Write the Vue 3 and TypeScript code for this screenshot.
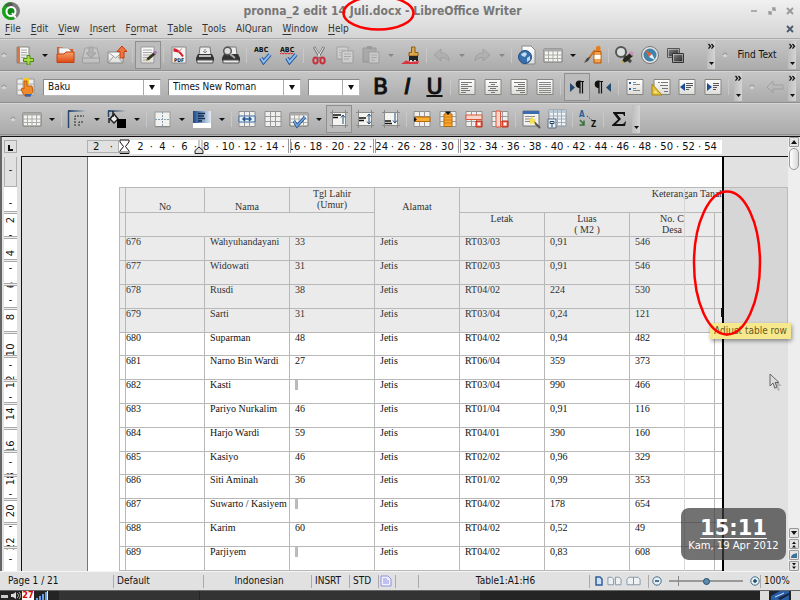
<script setup lang="ts">
import { ref } from 'vue'

interface Tag {
  t: string
  x: number
  y: number
  s: number
  fill: string
}

interface Tool {
  kind: 'icon' | 'arrow' | 'sep'
  id?: string
  label?: string
  on?: boolean
  off?: boolean
  tags?: Tag[]
}

const tool = (id: string, label: string, extra: Partial<Tool> = {}): Tool => ({ kind: 'icon', id, label, ...extra })
const arrow: Tool = { kind: 'arrow' }
const sep: Tool = { kind: 'sep' }
const faded: Tool = { kind: 'arrow', off: true }
const abc: Tag[] = [{ t: 'ABC', x: 2, y: 7, s: 7, fill: '#111' }]

const standard: Tool[] = [
  tool('new', 'New'), arrow, tool('open', 'Open'), tool('save', 'Save', { off: true }), tool('mail', 'E-mail'), sep,
  tool('edit', 'Edit file', { on: true }), sep,
  tool('pdf', 'Export as PDF', { tags: [{ t: 'PDF', x: 5, y: 17, s: 5, fill: '#222' }] }), tool('print', 'Print'), tool('preview', 'Page preview'), sep,
  tool('spell', 'Spelling', { tags: abc }), tool('autospell', 'Auto spellcheck', { tags: abc }), sep,
  tool('cut', 'Cut'), tool('copy', 'Copy', { off: true }), tool('paste', 'Paste', { off: true }), faded, tool('brush', 'Clone formatting'), sep,
  tool('undo', 'Undo', { off: true }), faded, tool('redo', 'Redo', { off: true }), faded, sep,
  tool('globe', 'Hyperlink'), tool('table', 'Table'), arrow, tool('draw', 'Drawing'), sep,
  tool('find', 'Find and replace'), tool('compass', 'Navigator'), tool('gallery', 'Gallery'),
]

const paragraph: Tool[] = [
  sep, tool('left', 'Align left'), tool('center', 'Align center'), tool('right', 'Align right'), tool('justify', 'Justify'), sep,
  tool('ltr', 'Left to right', { on: true }), tool('rtl', 'Right to left'), sep,
  tool('bullets', 'Bullets'), tool('styles', 'Numbering'), tool('outdent', 'Decrease indent'), tool('indent', 'Increase indent'), sep,
]

const tableTools: Tool[] = [
  tool('table', 'Insert table'), arrow, sep, tool('line', 'Line style'), arrow, tool('fill', 'Line color'), arrow, sep,
  tool('borders', 'Borders'), arrow, tool('shade', 'Background color'), arrow, sep,
  tool('merge', 'Merge cells'), tool('split', 'Split cells'), tool('optimize', 'Optimize'), arrow,
  tool('top', 'Top', { on: true }), tool('middle', 'Center vertical'), tool('bottom', 'Bottom'), sep,
  tool('addrow', 'Insert row'), tool('addcol', 'Insert column'), tool('delrow', 'Delete row'), tool('delcol', 'Delete column'), sep,
  tool('autoformat', 'AutoFormat'), tool('props', 'Table properties'), sep,
  tool('sort', 'Sort', { tags: [{ t: 'A', x: 1, y: 8, s: 8, fill: '#28649b' }, { t: 'Z', x: 13, y: 18, s: 8, fill: '#111' }] }), sep, tool('sum', 'Sum'),
]

const menus: [string, string][] = [
  ['F', 'ile'], ['E', 'dit'], ['V', 'iew'], ['I', 'nsert'], ['F|o', 'rmat'], ['T', 'able'], ['T', 'ools'], ['', 'AlQuran'], ['W', 'indow'], ['H', 'elp'],
]
const lead = (m: string) => (m.includes('|') ? m.split('|')[0] : '')
const key = (m: string) => (m.includes('|') ? m.split('|')[1] : m)

const hRuler = Array.from({ length: 53 }, (_, i) => (i % 2 ? '·' : String(i + 2)))
const vRuler = Array.from({ length: 23 }, (_, i) => (i % 2 ? String(i + 1) : '-'))
const colMarks = [289, 374, 459]
const rowMarks = [54, 79, 102, 126, 150, 174, 198, 222, 245, 270, 293, 317, 341, 365, 389]

const rows: string[][] = [
  ['676', 'Wahyuhandayani', '33', 'Jetis', 'RT03/03', '0,91', '546'],
  ['677', 'Widowati', '31', 'Jetis', 'RT02/03', '0,91', '546'],
  ['678', 'Rusdi', '38', 'Jetis', 'RT04/02', '224', '530'],
  ['679', 'Sarti', '31', 'Jetis', 'RT03/04', '0,24', '121'],
  ['680', 'Suparman', '48', 'Jetis', 'RT04/02', '0,94', '482'],
  ['681', 'Narno Bin Wardi', '27', 'Jetis', 'RT06/04', '359', '373'],
  ['682', 'Kasti', '', 'Jetis', 'RT03/04', '990', '466'],
  ['683', 'Pariyo Nurkalim', '46', 'Jetis', 'RT01/04', '0,91', '116'],
  ['684', 'Harjo Wardi', '59', 'Jetis', 'RT04/01', '390', '160'],
  ['685', 'Kasiyo', '46', 'Jetis', 'RT02/02', '0,96', '329'],
  ['686', 'Siti Aminah', '36', 'Jetis', 'RT01/02', '0,99', '353'],
  ['687', 'Suwarto / Kasiyem', '', 'Jetis', 'RT04/02', '178', '654'],
  ['688', 'Karim', '60', 'Jetis', 'RT04/02', '0,52', '49'],
  ['689', 'Parjiyem', '', 'Jetis', 'RT04/02', '0,83', '608'],
]

const style = ref('Baku')
const font = ref('Times New Roman')
const size = ref('')
const zoom = ref(50)
</script>

<template>
  <div class="window">
    <svg class="sprite" aria-hidden="true">
      <defs>
        <linearGradient id="orange" x1="0" y1="0" x2="0" y2="1"><stop offset="0" stop-color="#f9a468" /><stop offset="1" stop-color="#dd4814" /></linearGradient>
        <linearGradient id="paper" x1="0" y1="0" x2="0" y2="1"><stop offset="0" stop-color="#fff" /><stop offset="1" stop-color="#dcdcd8" /></linearGradient>
        <linearGradient id="blue" x1="0" y1="0" x2="1" y2="0"><stop offset="0" stop-color="#174a8c" /><stop offset="1" stop-color="#e4ecf5" /></linearGradient>
        <linearGradient id="fade" x1="0" y1="0" x2="1" y2="0"><stop offset="0" stop-color="#24476b" /><stop offset="1" stop-color="#24476b" stop-opacity="0" /></linearGradient>
        <linearGradient id="dark" x1="0" y1="0" x2="1" y2="1"><stop offset="0" stop-color="#888" /><stop offset="1" stop-color="#222" /></linearGradient>
      </defs>
      <symbol id="new" viewBox="0 0 20 20">
        <path d="M2 2h12v16H2z" fill="url(#paper)" stroke="#85857f" /><path d="M2 2h3v16H2z" fill="#d9744a" />
        <path d="M6 5h6M6 7.500h6M6 10h6M6 12.500h4" stroke="#aaa" />
        <path d="M12 10.500h3v3h3.500v3H15V20h-3v-3.500H8.500v-3H12z" fill="#a5dc47" stroke="#4c8b12" />
      </symbol>
      <symbol id="open" viewBox="0 0 20 20">
        <path d="M2 2h5l2 2h9v13H2z" fill="#d85a22" /><path d="M4 3h9l3 3v6H4z" fill="url(#paper)" stroke="#aaa" />
        <path d="M2 9h7l2-2h8v10.500H2z" fill="url(#orange)" stroke="#c43f10" />
      </symbol>
      <symbol id="save" viewBox="0 0 20 20">
        <path d="M4 3h12l2.500 10v5h-17v-5z" fill="#d0d0d0" stroke="#888" /><path d="M2 13h16" stroke="#888" />
        <path d="M8 2h4v6h3l-5 5-5-5h3z" fill="#aaa" stroke="#888" />
      </symbol>
      <symbol id="mail" viewBox="0 0 20 20">
        <path d="M1 7h15v11H1z" fill="url(#paper)" stroke="#888" /><path d="m1 7 7.500 6L16 7M1 18l5-6m10 6-5-6" fill="none" stroke="#999" />
        <path d="M15 1l5 5.500h-3V13h-4V6.500h-3z" fill="#ee7440" stroke="#c43f10" />
      </symbol>
      <symbol id="edit" viewBox="0 0 20 20">
        <path d="M3 2h13v16H3z" fill="url(#paper)" stroke="#999" /><path d="M5 5h9M5 7.500h9M5 10h8M5 12.500h5M5 15h4" stroke="#aaa" />
        <path d="m8 16 1-3 7-6 2 2-7 6z" fill="#35351f" /><path d="m15 7.500 2-2 2.500 2-2.500 2z" fill="#a679b9" /><path d="m8 16 .700-2 1.500 1.300z" fill="#e0d35f" />
      </symbol>
      <symbol id="pdf" viewBox="0 0 20 20">
        <path d="M3 2h14v16H3z" fill="#f4f4f4" stroke="#888" /><path d="M4.500 4c4 1 8 5 9.500 7.500M4.500 5.500l5 1" fill="none" stroke="#d8202a" stroke-width="2" /><path d="M12.500 3.500c-1 2-2 3-3.500 4" fill="none" stroke="#e0707a" />
      </symbol>
      <symbol id="print" viewBox="0 0 20 20">
        <path d="M5 2h10l1 8H4z" fill="#eee" stroke="#777" /><path d="M10 4v4m-2-2 2 2 2-2" fill="none" stroke="#888" />
        <path d="M3 9h14l2 4v3H1v-3z" fill="#333" /><path d="M4 11h12" stroke="#eee" stroke-width="1.500" /><path d="M2 15h16v3H2z" fill="#e8e8e8" stroke="#555" />
      </symbol>
      <symbol id="preview" viewBox="0 0 20 20">
        <path d="M5 2h10l1 8H4z" fill="#eee" stroke="#777" /><path d="M3 9h14l2 4v3H1v-3z" fill="#333" /><path d="M2 15h16v3H2z" fill="#e8e8e8" stroke="#555" />
        <circle cx="6.500" cy="6" r="3.800" fill="#ddd" stroke="#555" stroke-width="1.500" /><path d="m9 9 5 4" stroke="#aaa" stroke-width="2" />
      </symbol>
      <symbol id="spell" viewBox="0 0 20 20">
        <path d="m9 13 2.500 4L18 9.500" fill="none" stroke="#1f5599" stroke-width="4" /><path d="m9 13 2.500 4L18 9.500" fill="none" stroke="#8dbbed" stroke-width="2" />
      </symbol>
      <symbol id="autospell" viewBox="0 0 20 20"><use href="#spell" /><path d="m2 9 1.500-1L5 9l1.500-1L8 9l1.500-1L11 9l1.500-1L14 9l1.500-1" fill="none" stroke="#d22" /></symbol>
      <symbol id="cut" viewBox="0 0 20 20">
        <path d="m5 2 6.500 11M15 2 8.500 13" stroke="#777" stroke-width="2.500" /><path d="m5.500 2.500 6 10M14.500 2.500l-6 10" stroke="#eee" />
        <ellipse cx="6.500" cy="15.500" rx="2.200" ry="3" fill="none" stroke="#c8323c" stroke-width="2" /><ellipse cx="13.500" cy="15.500" rx="2.200" ry="3" fill="none" stroke="#c8323c" stroke-width="2" />
      </symbol>
      <symbol id="copy" viewBox="0 0 20 20">
        <path d="M2 2h11v12H2z" fill="#e2e2e2" stroke="#888" /><path d="M4 5h7M4 7.500h7M4 10h4" stroke="#aaa" />
        <path d="M7 6h11v12H7z" fill="#e8e8e8" stroke="#888" /><path d="M9 9h7M9 11.500h7M9 14h5" stroke="#999" />
      </symbol>
      <symbol id="paste" viewBox="0 0 20 20">
        <path d="M2 3h13v14H2z" fill="#999" stroke="#777" /><path d="M6 1h5v3H6z" fill="#777" /><path d="M8 7h10v11H8z" fill="#ddd" stroke="#888" /><path d="M10 10h6M10 12.500h6M10 15h4" stroke="#999" />
      </symbol>
      <symbol id="brush" viewBox="0 0 20 20">
        <path d="M10.500 2h3.500v5.500h3V11H8V7.500h2.500z" fill="#dca74c" stroke="#8b5c19" /><path d="M8 11h9v5H8z" fill="#222" /><path d="M9 16h2m2 0h2" stroke="#ddd" stroke-width="2" /><path d="m5 15.500-5 3.500h17l1-3-8 1z" fill="#dc3340" />
      </symbol>
      <symbol id="undo" viewBox="0 0 20 20"><path d="M2 10l7-6v4c5 0 8 3 8 8-2-2.500-4-3.500-8-3.500V16z" fill="#aaa" stroke="#888" /></symbol>
      <symbol id="redo" viewBox="0 0 20 20"><path d="m18 10-7-6v4c-5 0-8 3-8 8 2-2.500 4-3.500 8-3.500V16z" fill="#aaa" stroke="#888" /></symbol>
      <symbol id="globe" viewBox="0 0 20 20">
        <path d="M5 1h9l4 4v14H5z" fill="url(#paper)" stroke="#888" /><circle cx="8" cy="12" r="6.500" fill="#376fad" stroke="#204d83" />
        <path d="M4 9l4-2 2 2-2 3-3-1zm6 4 3-2v4l-3 2z" fill="#c1daef" />
      </symbol>
      <symbol id="table" viewBox="0 0 20 20">
        <path d="M1 4h18v13H1z" fill="#f5f5f0" stroke="#777" /><path d="M1 4h18v2.500H1z" fill="#aaa" /><path d="M5.500 6v11m4.500-11v11m4.500-11v11M1 10h18M1 13.500h18" stroke="#aaa" />
      </symbol>
      <symbol id="draw" viewBox="0 0 20 20">
        <path d="m13 2 3-1.500 1.500 1.500V6h-4.500z" fill="#e57e1d" /><path d="M11 6.500h7V18h-7z" fill="#f3a34e" stroke="#b4580b" /><path d="M11.500 10h6v4h-6z" fill="#fff" />
        <path d="M12 5 6 13" stroke="#c97123" stroke-width="2" /><path d="M7.500 12 5 16l-4 2 3-5z" fill="#444" />
      </symbol>
      <symbol id="find" viewBox="0 0 20 20">
        <circle cx="7" cy="7" r="5" fill="#d9dedf" stroke="#555" stroke-width="2" /><path d="m10 11 7 6" stroke="#444" stroke-width="3" />
        <path d="m8 18 1-4 7-6 3 3-7 6z" fill="#27271a" /><path d="m15 8 2-2 3 2-2 3z" fill="#c991c2" /><path d="m8 18 .500-2.500 2 2z" fill="#e5c845" />
      </symbol>
      <symbol id="compass" viewBox="0 0 20 20">
        <circle cx="10" cy="10" r="7.500" fill="#3f83ab" stroke="#e4e4e4" stroke-width="2" /><circle cx="10" cy="10" r="8.500" fill="none" stroke="#777" />
        <path d="m5 5 7 4-3 3z" fill="#e0603a" /><path d="m15 15-3-6-3 3z" fill="#e8f0f4" />
      </symbol>
      <symbol id="gallery" viewBox="0 0 20 20"><path d="M2 4h11v8H2z" fill="url(#dark)" stroke="#ddd" /><path d="M1.500 3.500h12v9h-12z" fill="none" stroke="#555" /><path d="M7 9h10v8H7z" fill="url(#dark)" stroke="#ddd" /><path d="M6.500 8.500h11v9h-11z" fill="none" stroke="#333" /></symbol>
      <symbol id="sheet" viewBox="0 0 20 20"><path d="M2 2.500h16v15H2z" fill="url(#paper)" stroke="#858580" /></symbol>
      <symbol id="left" viewBox="0 0 20 20"><use href="#sheet" /><path d="M4 5.500h11M4 7.500h7M4 9.500h11M4 11.500h7M4 13.500h9M4 15.500h5" stroke="#777" /></symbol>
      <symbol id="center" viewBox="0 0 20 20"><use href="#sheet" /><path d="M6 5.500h8M8 7.500h4M5 9.500h10M7 11.500h6M5 13.500h10M8 15.500h4" stroke="#777" /></symbol>
      <symbol id="right" viewBox="0 0 20 20"><use href="#sheet" /><path d="M5 5.500h11M9 7.500h7M5 9.500h11M9 11.500h7M7 13.500h9M11 15.500h5" stroke="#777" /></symbol>
      <symbol id="justify" viewBox="0 0 20 20"><use href="#sheet" /><path d="M4 5.500h12M4 7.500h12M4 9.500h12M4 11.500h12M4 13.500h12M4 15.500h12" stroke="#888" /></symbol>
      <symbol id="ltr" viewBox="0 0 20 20"><path d="m3 6 5 4.500L3 15z" fill="#254a70" /><path d="M12.500 4a3 3 0 0 0 0 6.500h.500V4zM13 4v12.500M15.500 4v12.500M12 4.500h5" fill="#111" stroke="#111" stroke-width="1.200" /></symbol>
      <symbol id="rtl" viewBox="0 0 20 20"><path d="m18 6-5 4.500 5 4.500z" fill="#254a70" /><path d="M5.500 4a3 3 0 0 0 0 6.500H6V4zM6 4v12.500M8.500 4v12.500M5 4.500h5" fill="#111" stroke="#111" stroke-width="1.200" /></symbol>
      <symbol id="bullets" viewBox="0 0 20 20"><use href="#sheet" /><path d="M4 6h2M4 12h2" stroke="#1f5ea8" stroke-width="2" /><path d="M8 5.500h3M8 7.500h7M8 11.500h3M8 13.500h7" stroke="#888" /></symbol>
      <symbol id="styles" viewBox="0 0 20 20"><path d="M3 2.500h16v15H3z" fill="url(#paper)" stroke="#858580" /><path d="M7 5.500h2m1 0h7M9 8.500h8M11 11.500h6M13 14.500h4" stroke="#777" /><path d="M1 7v11h10z" fill="#e6c33b" stroke="#a98612" /><path d="M3.500 13v3h3z" fill="#f6eaad" /></symbol>
      <symbol id="outdent" viewBox="0 0 20 20"><use href="#sheet" /><path d="M8 6v8L3 10z" fill="#1c4f91" /><path d="M9 6.500h7M9 8.500h7M9 10.500h5M9 12.500h3" stroke="#555" /></symbol>
      <symbol id="indent" viewBox="0 0 20 20"><use href="#sheet" /><path d="M4 6v8l5-4z" fill="#1c4f91" /><path d="M10 6.500h6M10 8.500h6M10 10.500h4M10 12.500h3" stroke="#555" /></symbol>
      <symbol id="line" viewBox="0 0 20 20"><path d="M1.500 19V2" stroke="#24476b" stroke-width="1.500" /><path d="M1 1h18v2H1z" fill="url(#fade)" /><path d="M8 17V7h9M12 17v-4h5" fill="none" stroke="#222" stroke-dasharray="2 1" /></symbol>
      <symbol id="fill" viewBox="0 0 20 20"><path d="M1.500 8V2" stroke="#24476b" stroke-width="1.500" /><path d="M1 1h18v2H1z" fill="url(#fade)" /><path d="m3 10 4-5 4 5-4 4z" fill="#eee" stroke="#222" stroke-width="1.500" /><path d="M6 2v6M2 9v5" stroke="#222" stroke-width="1.500" /><path d="M10 10h9v9h-9z" fill="#000" /></symbol>
      <symbol id="borders" viewBox="0 0 20 20"><path d="M3 3h15v15H3z" fill="#f1f1ed" stroke="#999" /><path d="M10.500 3v15M3 10.500h15" stroke="#7f9eb0" stroke-dasharray="2 1" /><path d="M3 17.500h15" stroke="#888" /></symbol>
      <symbol id="shade" viewBox="0 0 20 20"><path d="M1 2h18v12H1z" fill="url(#blue)" /><path d="M1 14h18v5H1z" fill="#fff" /><path d="M6 4.500h7M6 7h6M6 9.500h7M6 12h4" stroke="#112d50" stroke-width="1.300" /></symbol>
      <symbol id="grid" viewBox="0 0 20 20"><path d="M2 2.500h16v15H2z" fill="#efefed" stroke="#909090" /><path d="M7.500 2v16m5-16v16M2 7.500h16M2 12.500h16" stroke="#999" /></symbol>
      <symbol id="merge" viewBox="0 0 20 20"><use href="#grid" /><path d="M2 7h16v6H2z" fill="#e8f2fa" stroke="#3e6a9c" /><path d="M6 10h8m-6-2-2 2 2 2m4-4 2 2-2 2" fill="none" stroke="#255590" stroke-width="1.500" /></symbol>
      <symbol id="split" viewBox="0 0 20 20"><use href="#grid" /></symbol>
      <symbol id="optimize" viewBox="0 0 20 20"><use href="#table" /><path d="m5 12 3 5 8-9" fill="none" stroke="#1e4f91" stroke-width="3" /><path d="m5 12 3 5 8-9" fill="none" stroke="#78a8de" stroke-width="1.500" /></symbol>
      <symbol id="cell" viewBox="0 0 20 20"><path d="M3 3h14v14H3z" fill="#f4f4f1" /><path d="M3.500 1v18m13-18v18M1 3.500h18M1 16.500h18" stroke="#8b8b8b" /></symbol>
      <symbol id="top" viewBox="0 0 20 20"><use href="#cell" /><path d="M4 6h8M4 8.500h5" stroke="#111" stroke-width="1.500" /><path d="M14 15V6m-2 2.500L14 6l2 2.500" fill="none" stroke="#244d78" /></symbol>
      <symbol id="middle" viewBox="0 0 20 20"><use href="#cell" /><path d="M4 9h7M4 11.500h5" stroke="#111" stroke-width="1.500" /><path d="M14 15V5m-2 2.500L14 5l2 2.500m-4 5L14 15l2-2.500" fill="none" stroke="#244d78" /></symbol>
      <symbol id="bottom" viewBox="0 0 20 20"><use href="#cell" /><path d="M4 12h6M4 14.500h7" stroke="#111" stroke-width="1.500" /><path d="M14 4v10m-2-2.500 2 2.500 2-2.500" fill="none" stroke="#244d78" /></symbol>
      <symbol id="addrow" viewBox="0 0 20 20"><use href="#grid" /><path d="M3 8h15v4.500H3z" fill="#ffac35" stroke="#b46a09" /><path d="m2 8 3 2.500L2 13z" fill="#111" /></symbol>
      <symbol id="addcol" viewBox="0 0 20 20"><use href="#grid" /><path d="M6 5h8v12.500H6z" fill="#ffa526" stroke="#b46a09" /><path d="M6 8h8M6 11h8M6 14h8" stroke="#c57d1b" /><path d="M7 2.500h6L10 6z" fill="#111" /></symbol>
      <symbol id="del" viewBox="0 0 20 20"><path d="M12 12h6v6h-6z" fill="#e8503a" stroke="#c2321c" /><path d="m13.500 13.500 3 3m0-3-3 3" stroke="#fff" stroke-width="1.500" /></symbol>
      <symbol id="delrow" viewBox="0 0 20 20"><use href="#grid" /><path d="M2 6h16v4.500H2z" fill="#f7d8cf" stroke="#dd5538" /><use href="#del" /></symbol>
      <symbol id="delcol" viewBox="0 0 20 20"><use href="#grid" /><path d="M6 2h4.500v16H6z" fill="#f7d8cf" stroke="#dd5538" /><use href="#del" /></symbol>
      <symbol id="autoformat" viewBox="0 0 20 20"><path d="M2 2h16v15H2z" fill="#f1f1ee" stroke="#777" /><path d="M2 2h16v3H2z" fill="#386bb0" /><path d="M4 7.500h10M4 10h8M4 12.500h6" stroke="#888" /><path d="m12 12 7 7" stroke="#555" stroke-width="2" /><path d="m11 7 1.500 3 3 .500-2 2 .500 3-3-1.500-2.500 1.500.500-3-2-2 3-.500z" fill="#f3df57" /></symbol>
      <symbol id="props" viewBox="0 0 20 20"><path d="M2 1h17v16H2z" fill="#eff3f6" stroke="#8796a2" /><path d="M2 1h17v3H2z" fill="#b9cbd9" /><path d="M6.500 1v16m4-16v16m4-16v16M2 7h17M2 10h17M2 13.500h17" stroke="#9fadb9" /><path d="M1 10h8v9H1z" fill="#e8eef2" stroke="#5d7183" /><path d="M3 12.500h4v2H3zm2 2v4" fill="none" stroke="#244867" /></symbol>
      <symbol id="sort" viewBox="0 0 20 20"><path d="m9 7 6 5" stroke="#222" stroke-dasharray="1 1.500" /><path d="m2 11 4 4.500m0-4V16H1.500" fill="none" stroke="#38713b" stroke-width="1.500" /></symbol>
      <symbol id="sum" viewBox="0 0 20 20"><path d="M4 3h12v4h-1c-.500-2-1-2-2.500-2H8l4 5-5 5h6c2 0 2.500-1 3-2.500h1L16 17H3v-1l6-5.500L4 4z" fill="#111" /></symbol>
      <symbol id="more" viewBox="0 0 8 28">
        <path d="m1.500 3 2 2.300-2 2.300m3-4.600 2 2.300-2 2.300" fill="none" stroke="#111" stroke-width="1.300" /><path d="M2 21h5l-2.500 3z" fill="#111" />
      </symbol>
      <symbol id="grip" viewBox="0 0 6 6"><circle cx="3" cy="3" r="2.300" fill="#d2d2d2" /><path d="M1 3a2 2 0 0 1 4 0" fill="none" stroke="#8c8c8c" /></symbol>
    </svg>

    <header class="caption">
      <div class="titlebar">
        <svg class="logo" viewBox="0 0 20 20" aria-hidden="true">
          <circle cx="10" cy="10" r="9" fill="#7a7a7a" /><path d="M10 1a9 9 0 1 0 3 17.500L10 10z" fill="#19a319" /><path d="M4 5a8 8 0 0 1 8-3l-1 4z" fill="#555" />
          <circle cx="10" cy="10.500" r="4.500" fill="#0d8a14" stroke="#fff" stroke-width="2" /><path d="m11 12 4 5" stroke="#fff" stroke-width="2" />
        </svg>
        <h1>pronna_2 edit 14 Juli.docx - LibreOffice Writer</h1>
        <div class="controls">
          <button aria-label="Minimize"><svg viewBox="0 0 8 8"><path d="M1 4h6" stroke="#999" stroke-width="1.500" /></svg></button>
          <button aria-label="Restore"><svg viewBox="0 0 8 8"><path d="M5 0v3h3M0 5h3v3M5 3l2.500-2.500M3 5 .500 7.500" fill="none" stroke="#999" stroke-width="1.500" /></svg></button>
          <button aria-label="Close window"><svg viewBox="0 0 8 8"><path d="m1 1 6 6m0-6L1 7" stroke="#999" stroke-width="1.800" /></svg></button>
        </div>
      </div>
      <nav class="menubar">
        <button v-for="m in menus" :key="m[0] + m[1]">{{ lead(m[0]) }}<u>{{ key(m[0]) }}</u>{{ m[1] }}</button>
        <button class="closedoc" aria-label="Close document"><svg viewBox="0 0 8 8"><path d="m1 1 6 6m0-6L1 7" stroke="#4a5a6a" stroke-width="1.800" /></svg></button>
      </nav>
    </header>

    <div class="toolbar">
      <svg class="grip"><use href="#grip" /></svg>
      <template v-for="(t, i) in standard" :key="i">
        <button v-if="t.kind === 'icon'" class="tool" :class="{ on: t.on, off: t.off }" :aria-label="t.label">
          <svg viewBox="0 0 20 20"><use :href="'#' + t.id" /><text v-for="g in t.tags" :key="g.t" :x="g.x" :y="g.y" :font-size="g.s" :fill="g.fill">{{ g.t }}</text></svg>
        </button>
        <span v-else :class="[t.kind, { off: t.off }]"></span>
      </template>
      <span class="spring"></span>
      <button class="more" aria-label="More standard tools"><svg><use href="#more" /></svg></button>
      <svg class="grip wide"><use href="#grip" /></svg>
      <button class="findtext">Find Text</button>
      <button class="more" aria-label="More find tools"><svg><use href="#more" /></svg></button>
    </div>

    <div class="toolbar formatting">
      <svg class="grip"><use href="#grip" /></svg>
      <button class="tool" aria-label="Styles and formatting">
        <svg viewBox="0 0 20 20"><path d="M2 2h17v16H2z" fill="#eee" stroke="#999" /><path d="M8 2v16m5-16v16M2 7h17M2 13h17" stroke="#aaa" /><path d="M8 1h6v6H8z" fill="#f6c52b" /><path d="M9 4h3v5h5l1 6-3 4h-5l-4-6 1-2 2 1z" fill="#f08a2a" stroke="#c35d0d" /><path d="M10 17h6v2.500h-6z" fill="#3565a8" /></svg>
      </button>
      <label class="combo para"><select v-model="style" aria-label="Paragraph style"><option>Baku</option></select><span class="drop"></span></label>
      <label class="combo face"><select v-model="font" aria-label="Font name"><option>Times New Roman</option></select><span class="drop"></span></label>
      <label class="combo points"><select v-model="size" aria-label="Font size"><option></option></select><span class="drop"></span></label>
      <button class="glyph">B</button>
      <button class="glyph slant">I</button>
      <button class="glyph under">U</button>
      <template v-for="(t, i) in paragraph" :key="i">
        <button v-if="t.kind === 'icon'" class="tool" :class="{ on: t.on, off: t.off }" :aria-label="t.label"><svg><use :href="'#' + t.id" /></svg></button>
        <span v-else :class="t.kind"></span>
      </template>
      <span class="spring"></span>
      <button class="more" aria-label="More formatting tools"><svg><use href="#more" /></svg></button>
      <svg class="grip wide"><use href="#grip" /></svg>
      <button class="tool off" aria-label="Back"><svg viewBox="0 0 20 20"><path d="m2 10 6-6v4h10v4H8v4z" fill="#bbb" stroke="#888" /></svg></button>
      <button class="more" aria-label="More navigation tools"><svg><use href="#more" /></svg></button>
    </div>

    <div class="toolbar tables">
      <svg class="grip"><use href="#grip" /></svg>
      <template v-for="(t, i) in tableTools" :key="i">
        <button v-if="t.kind === 'icon'" class="tool" :class="{ on: t.on, off: t.off }" :aria-label="t.label">
          <svg viewBox="0 0 20 20"><use :href="'#' + t.id" /><text v-for="g in t.tags" :key="g.t" :x="g.x" :y="g.y" :font-size="g.s" :fill="g.fill">{{ g.t }}</text></svg>
        </button>
        <span v-else :class="t.kind"></span>
      </template>
      <button class="more" aria-label="More table tools"><svg viewBox="0 0 8 28"><path d="M2 21h5l-2.500 3z" fill="#111" /></svg></button>
    </div>

    <main class="editor">
      <div class="hruler">
        <button class="corner" aria-label="Tab type"><svg viewBox="0 0 12 12"><path d="M4 4v5h4" fill="none" stroke="#111" stroke-width="2" /></svg></button>
        <div class="margin"><span>2</span><span>·</span></div>
        <div class="scale">
          <span v-for="(n, i) in hRuler" :key="i">{{ n }}</span>
        </div>
        <i v-for="x in colMarks" :key="x" class="colmark" :style="{ left: x + 'px' }"></i>
        <svg class="indents" viewBox="0 0 90 16">
          <path d="M1 1h9v2L6.500 7.500 10 12v2.500H1V12l3.500-4.500L1 3z" fill="#fff" stroke="#111" /><path d="M1.500 12h8v2h-8z" fill="#aaa" />
          <path d="M80 1v8m3-8v13" stroke="#999" /><path d="M76 11.500 80 8l4 3.500v3h-8z" fill="#ddd" stroke="#222" />
        </svg>
      </div>
      <div class="body">
        <div class="vruler">
          <div class="vmargin">-</div>
          <div class="vscale"><span v-for="(n, i) in vRuler" :key="i">{{ n }}</span></div>
          <i v-for="y in rowMarks" :key="y" class="rowmark" :style="{ top: y + 'px' }"></i>
        </div>
        <div class="canvas">
          <div class="spill"></div>
          <div class="page">
            <table>
              <colgroup><col class="edge" /><col class="no" /><col class="std" /><col class="std" /><col class="std" /><col class="std" /><col class="std" /><col class="std" /><col class="rest" /></colgroup>
              <thead>
                <tr>
                  <th></th><th class="low">No</th><th class="low">Nama</th><th>Tgl Lahir<br />(Umur)</th><th rowspan="2" class="low tall">Alamat</th><th colspan="4">Keterangan Tanah</th>
                </tr>
                <tr>
                  <th></th><th colspan="3"></th><th>Letak</th><th class="pale">Luas<br />( M2 )</th><th class="pale">No. C<br />Desa</th><th class="pale"></th>
                </tr>
              </thead>
              <tbody>
                <tr v-for="(r, i) in rows" :key="r[0]" :class="{ picked: i < 4 }">
                  <td></td>
                  <td v-for="(c, j) in r" :key="j" :class="{ first: j === 0, pale: j > 4 }"><template v-if="c">{{ c }}</template><i v-else class="blank"></i></td>
                  <td class="pale"></td>
                </tr>
                <tr><td></td><td></td><td></td><td><i class="blank"></i></td><td></td><td><i class="blank"></i></td><td class="pale"></td><td class="pale"></td><td class="pale"></td></tr>
              </tbody>
            </table>
            <i class="guide"></i>
          </div>
        </div>
        <div class="scrollbar">
          <button aria-label="Scroll up"><svg viewBox="0 0 10 10"><path d="m2 7 3-4 3 4z" fill="#111" /></svg></button>
          <i class="thumb"></i>
          <span class="spring"></span>
          <button aria-label="Scroll down"><svg viewBox="0 0 10 10"><path d="m2 3 3 4 3-4z" fill="#111" /></svg></button>
          <button aria-label="Previous page"><svg viewBox="0 0 10 10"><path d="m3 5 2-2.500L7 5zm0 3.500L5 6l2 2.500z" fill="#111" /></svg></button>
          <button aria-label="Navigation"><svg viewBox="0 0 10 10"><path d="M2 8c0-3 2-4 6-5v5z" fill="#3d7196" /></svg></button>
          <button aria-label="Next page"><svg viewBox="0 0 10 10"><path d="m3 2 2 2.500L7 2zm0 3.500L5 8l2-2.500z" fill="#111" /></svg></button>
        </div>
      </div>
    </main>

    <footer class="status">
      <span class="start">Page 1 / 21</span><span>Default</span><span class="mid">Indonesian</span><span>INSRT</span><span>STD</span>
      <span class="tight"><svg class="doc" viewBox="0 0 12 12"><path d="M1 1h7l3 3v7H1z" fill="#f0f0ff" stroke="#8f8fe0" /><path d="M3 4h4M3 6h6M3 8h6" stroke="#8f8fe0" /></svg></span><span></span>
      <span class="mid">Table1:A1:H6</span>
      <span class="views">
        <button aria-label="Single page"><svg viewBox="0 0 8 10"><path d="M1 1h4l2 2v6H1z" fill="#cfe2f5" stroke="#2d5f9e" stroke-width="1.500" /></svg></button>
        <button class="duo" aria-label="Multiple pages"><svg viewBox="0 0 16 10"><path d="M1 1h4l2 2v6H1zm8 0h4l2 2v6H9z" fill="#edf1f4" stroke="#8496a5" /></svg></button>
        <button class="duo" aria-label="Book view"><svg viewBox="0 0 16 10"><path d="M3 1h5v8H1V3zm5 0h5l2 2v6H8z" fill="#edf1f4" stroke="#8496a5" /></svg></button>
      </span>
      <span class="zoom">
        <button aria-label="Zoom out"><svg viewBox="0 0 10 10"><circle cx="5" cy="5" r="4.200" fill="#e5eff6" stroke="#48708c" /><path d="M3 5h4" stroke="#1c4767" stroke-width="1.500" /></svg></button>
        <input v-model="zoom" type="range" aria-label="Zoom" />
        <button aria-label="Zoom in"><svg viewBox="0 0 10 10"><circle cx="5" cy="5" r="4.200" fill="#e5eff6" stroke="#48708c" /><path d="M3 5h4M5 3v4" stroke="#1c4767" stroke-width="1.500" /></svg></button>
      </span>
      <span>100%</span>
    </footer>

    <div class="taskbar">
      <svg class="tray" viewBox="0 0 22 9"><path d="M1 4h7v3H1z" fill="#ccc" /><path d="M11 3h2l3-2v7l-3-2h-2z" fill="#ddd" /><path d="M17 2c2 2 2 3 0 5m2-6c2 2 2 5 0 7" fill="none" stroke="#bbb" /></svg>
      <b>27</b>
      <svg class="bars" viewBox="0 0 14 9"><path d="M3 9V7m3 2V5m3 4V3m3 6V1" stroke="#6d9eea" stroke-width="2" /><path d="M13.500 0v9" stroke="#eee" /></svg>
      <i class="task"></i><i class="task long"></i>
      <span class="spring"></span>
      <svg class="pager" viewBox="0 0 40 9"><path d="M0 0h9v9H0zM31 0h9v9h-9z" fill="#dedede" /><path d="M11 0h18v9H11z" fill="#2a5fa8" /><path d="M11 0h9l-9 5zM18 7l11-5v2l-9 5z" fill="#18243a" /><path d="m15 6 9-4" stroke="#cfe0f4" /></svg>
    </div>

    <div class="tooltip" role="tooltip">Adjust table row</div>
    <svg class="pointer" viewBox="0 0 14 18" aria-hidden="true"><path d="m4 4 9 9h-4l2 4-2 1-2-4-2 3z" fill="#999" opacity=".6" /><path d="M1 1v12l3-3 2 5 2-1-2-4.500h4z" fill="#ddd" stroke="#666" /></svg>
    <aside class="clock"><time>15:11</time><span>Kam, 19 Apr 2012</span></aside>
    <svg class="marks" viewBox="0 0 800 600" aria-hidden="true">
      <path d="M722 308v9" stroke="#111" stroke-width="2" />
      <ellipse cx="378.500" cy="13" rx="35" ry="16.500" /><ellipse cx="727" cy="263" rx="33" ry="71.500" />
    </svg>
  </div>
</template>

<style>
body {
  margin: 0;
}
</style>

<style scoped>
.window {
  position: relative;
  display: flex;
  flex-direction: column;
  height: 100vh;
  overflow: hidden;
  background: #b0b0b0;
  color: #111;
  font: 10px/12px 'DejaVu Sans Condensed', 'DejaVu Sans', sans-serif;
}
.window * {
  box-sizing: border-box;
}
.sprite {
  position: absolute;
  width: 0;
  height: 0;
}
button {
  display: flex;
  align-items: center;
  justify-content: center;
  padding: 0;
  border: 0;
  background: none;
  color: inherit;
  font: inherit;
}
svg {
  display: block;
  flex: none;
}
.spring {
  flex: 1;
}
.caption {
  background: linear-gradient(#f0f0f0, #d4d4d4);
  border-bottom: 1px solid #aaa;
}
.titlebar {
  display: flex;
  align-items: center;
  height: 22px;
  padding: 0 6px 0 1px;
}
.logo {
  width: 20px;
  height: 20px;
}
h1 {
  flex: 1;
  margin: 0;
  padding-right: 6px;
  text-align: center;
  color: #777;
  font: bold 12px/20px 'DejaVu Sans Condensed', 'DejaVu Sans', sans-serif;
}
.controls {
  display: flex;
  gap: 10px;
}
.controls svg,
.closedoc svg {
  width: 8px;
  height: 8px;
}
.menubar {
  display: flex;
  align-items: center;
  gap: 10px;
  height: 14px;
  padding: 0 6px 0 5px;
  margin-bottom: 2px;
  color: #333;
}
.menubar u {
  text-underline-offset: 2px;
}
.closedoc {
  margin-left: auto;
}
.toolbar {
  display: flex;
  align-items: center;
  height: 32px;
  padding-right: 4px;
  background: linear-gradient(#c6c6c6, #ababab);
  border-top: 1px solid #d6d6d6;
  border-bottom: 1px solid #8e8e8e;
}
.grip {
  width: 6px;
  height: 6px;
  margin: 0 5px 0 1px;
}
.tables .grip {
  margin: 0 3px 0 10px;
}
.grip.wide {
  margin: 0 7px;
}
.tool {
  width: 26px;
  height: 28px;
  border: 1px solid transparent;
}
.tool svg {
  width: 20px;
  height: 20px;
}
.tool text {
  font-family: 'DejaVu Sans Condensed', 'DejaVu Sans', sans-serif;
  font-weight: bold;
}
.tool.on {
  background: #bcbcbc;
  border-color: #8f8f8f;
}
.tool.off svg {
  opacity: 0.5;
}
.arrow {
  display: flex;
  justify-content: center;
  width: 14px;
}
.arrow::before {
  content: '';
  border: 3px solid transparent;
  border-top-color: #111;
  border-bottom: 0;
}
.arrow.off {
  opacity: 0.3;
}
.sep {
  width: 1px;
  height: 16px;
  margin: 0 2px;
  background: #c8c8c8;
}
.formatting .sep {
  margin: 0 3px 0 2px;
}
.more {
  width: 8px;
  height: 28px;
  background: linear-gradient(90deg, #bdbdbd, #d4d4d4);
}
.more svg {
  width: 8px;
  height: 28px;
}
.findtext {
  width: 50px;
  margin-right: 3px;
  padding-right: 6px;
  white-space: nowrap;
}
.combo {
  position: relative;
  height: 17px;
  margin-right: 7px;
}
.tool + .combo {
  margin-left: 5px;
}
.para {
  width: 118px;
}
.face {
  width: 133px;
}
.points {
  width: 52px;
}
select {
  width: 100%;
  height: 17px;
  padding: 0 20px 0 4px;
  appearance: none;
  border: 1px solid #999;
  border-color: #888 #bbb #bbb #888;
  border-radius: 1px;
  background: #fff;
  color: #111;
  font: inherit;
}
.drop {
  position: absolute;
  top: 1px;
  right: 1px;
  display: flex;
  align-items: center;
  justify-content: center;
  width: 17px;
  height: 15px;
  border-left: 1px solid #aaa;
  pointer-events: none;
}
.drop::before {
  content: '';
  border: 3px solid transparent;
  border-top: 5px solid #111;
  border-bottom: 0;
}
.glyph {
  width: 27px;
  height: 28px;
  font: 22px/24px 'DejaVu Sans', sans-serif;
  -webkit-text-stroke: 1px #111;
}
.slant {
  font-style: italic;
}
.under {
  text-decoration: underline;
  text-underline-offset: 1px;
}
.editor {
  flex: 1;
  display: flex;
  flex-direction: column;
  min-height: 0;
  margin-top: 1px;
  border-top: 1px solid #111;
  border-left: 2px solid #666;
  background: #e1e1e1;
  font-family: 'DejaVu Sans', sans-serif;
}
.hruler {
  position: relative;
  display: flex;
  align-items: center;
  height: 19px;
  padding: 0 78px 0 2px;
}
.corner {
  width: 13px;
  height: 13px;
  border: 1px solid #aaa;
}
.corner svg {
  width: 12px;
  height: 12px;
}
.margin {
  display: flex;
  justify-content: space-around;
  width: 32px;
  height: 13px;
  margin-left: 70px;
  border: 1px solid #b0b0b0;
}
.scale {
  flex: 1;
  display: grid;
  grid-template-columns: repeat(53, 1fr);
  height: 14px;
  padding: 1px 6px 0 16px;
  background: #fff;
}
.scale span,
.margin span {
  display: flex;
  justify-content: center;
  min-width: 0;
}
.colmark {
  position: absolute;
  top: 2px;
  width: 3px;
  height: 14px;
  margin-left: -3px;
  background: #fff;
  border: solid #999;
  border-width: 0 1px;
}
.indents {
  position: absolute;
  left: 117px;
  top: 2px;
  width: 90px;
  height: 16px;
}
.body {
  flex: 1;
  display: flex;
  min-height: 0;
}
.vruler {
  position: relative;
  display: flex;
  flex-direction: column;
  width: 13px;
  margin: 1px 4px 0 2px;
  background: #fff;
  overflow: hidden;
}
.vmargin {
  height: 30px;
  padding-top: 7px;
  background: #e1e1e1;
  border: 1px solid #b0b0b0;
  border-top: 0;
  text-align: center;
}
.vscale {
  flex: 1;
  display: flex;
  flex-direction: column;
  padding: 9px 0 3px;
}
.vscale span {
  flex: 1;
  display: flex;
  align-items: center;
  justify-content: center;
  min-height: 0;
  writing-mode: vertical-rl;
  transform: rotate(180deg);
}
.vscale span:nth-child(odd) {
  writing-mode: horizontal-tb;
}
.rowmark {
  position: absolute;
  left: 0;
  width: 13px;
  height: 3px;
  border: solid #aaa;
  border-width: 1px 0;
  background: #eee;
}
.canvas {
  position: relative;
  flex: 1;
  display: flex;
  min-width: 0;
  border-top: 1px solid #111;
  border-left: 1px solid #111;
  overflow: hidden;
}
.page {
  position: relative;
  flex: 1;
  min-width: 0;
  margin: 0 64px 0 65px;
  padding: 30px 0 0 31px;
  background: #fff;
  border-left: 1px solid #777;
  border-right: 2px solid #000;
  overflow: hidden;
}
.spill {
  position: absolute;
  right: 0;
  top: 30px;
  width: 64px;
  height: 144px;
  background: #d6d6d6;
  border-top: 1px solid #bbb;
  border-right: 1px solid #bbb;
}
table {
  width: 797px;
  table-layout: fixed;
  border-collapse: collapse;
  color: #111;
  font: 10px/10px 'Liberation Serif', serif;
}
.edge {
  width: 6px;
}
.no {
  width: 79px;
}
.std {
  width: 85px;
}
.rest {
  width: 202px;
}
th,
td {
  height: 24px;
  padding: 0 5px;
  border: 1px solid #b8b8b8;
  vertical-align: top;
  text-align: left;
  white-space: nowrap;
}
th {
  padding: 0;
  text-align: center;
  font-weight: normal;
  line-height: 11px;
}
thead tr:first-child th {
  height: 25px;
}
.low {
  vertical-align: bottom;
}
.low.tall {
  vertical-align: top;
  padding-top: 13px;
}
thead,
.picked {
  background: #ebebeb;
  color: #333;
}
tbody tr:nth-child(5n) td {
  height: 23px;
}
.first {
  padding: 0;
}
th:first-child,
td:first-child {
  padding: 0;
}
.pale {
  border-left-color: #d8d8d8;
}
.blank {
  display: block;
  width: 3px;
  height: 10px;
  background: #bbb;
}
.guide {
  position: absolute;
  left: 596px;
  top: 30px;
  bottom: 0;
  width: 1px;
  background: #d6d6d6;
}
.scrollbar {
  display: flex;
  flex-direction: column;
  align-items: center;
  gap: 1px;
  width: 12px;
  margin-top: -19px;
  background: #eee;
}
.scrollbar button {
  width: 10px;
  height: 10px;
  border: 1px solid #999;
  border-radius: 1px;
  background: #e4e4e4;
}
.scrollbar button svg {
  width: 10px;
  height: 10px;
}
.thumb {
  width: 10px;
  height: 22px;
  border: 1px solid #999;
  border-radius: 5px;
  background: linear-gradient(90deg, #fff, #d8d8d8);
}
.status {
  display: grid;
  grid-template-columns: 114px 90px 108px 38px 29px 17px 23px 1fr 59px 112px 39px;
  align-items: center;
  height: 20px;
  background: #e1e1e1;
  border-top: 1px solid #f5f5f5;
  border-bottom: 1px solid #666;
}
.status > span {
  display: flex;
  align-items: center;
  height: 13px;
  padding-left: 3px;
  border-right: 1px solid #aaa;
  white-space: nowrap;
}
.status > span:last-child {
  border: 0;
}
.status > .start {
  padding-left: 8px;
}
.status > .mid {
  justify-content: center;
}
.status > .tight {
  padding-left: 1px;
}
.doc {
  width: 12px;
  height: 12px;
}
.status > .views {
  gap: 4px;
  padding-left: 5px;
}
.views button svg {
  width: 8px;
  height: 10px;
}
.views .duo svg {
  width: 15px;
}
.status > .zoom {
  gap: 3px;
}
.zoom svg {
  width: 10px;
  height: 10px;
}
input[type='range'] {
  flex: 1;
  min-width: 0;
  height: 10px;
  margin: 0 4px;
  appearance: none;
  background: linear-gradient(90deg, transparent 9px, #888 9px 10px, transparent 10px), linear-gradient(transparent 4px, #999 4px 6px, transparent 6px);
}
input[type='range']::-webkit-slider-thumb {
  appearance: none;
  width: 7px;
  height: 7px;
  border: 1px solid #234c6b;
  border-radius: 4px;
  background: #5a8cad;
}
.taskbar {
  display: flex;
  height: 9px;
  background: #242424;
  line-height: 9px;
}
.taskbar svg {
  height: 9px;
}
.tray {
  width: 22px;
}
.taskbar b {
  width: 12px;
  background: #fff;
  color: #e00000;
  text-align: center;
  font-size: 9px;
}
.bars {
  width: 14px;
}
.task {
  width: 140px;
  margin-left: 11px;
  background: #333;
}
.task.long {
  width: 280px;
  margin-left: 1px;
}
.pager {
  width: 40px;
}
.tooltip {
  position: absolute;
  left: 710px;
  top: 323px;
  width: 81px;
  height: 16px;
  text-align: center;
  line-height: 16px;
  white-space: nowrap;
  background: #f6e88d;
  color: #6c5a1c;
  box-shadow: 1px 2px 4px #0006;
}
.pointer {
  position: absolute;
  left: 769px;
  top: 373px;
  width: 14px;
  height: 18px;
}
.clock {
  position: absolute;
  right: 14px;
  bottom: 40px;
  display: flex;
  flex-direction: column;
  align-items: center;
  width: 105px;
  height: 52px;
  padding-top: 8px;
  border-radius: 8px;
  background: rgb(60 60 60 / 72%);
  color: #fff;
  font-family: 'DejaVu Sans', sans-serif;
}
.clock time {
  font-size: 21px;
  font-weight: bold;
  line-height: 24px;
  text-decoration: underline 1px;
  text-underline-offset: 3px;
}
.marks {
  position: absolute;
  left: 0;
  top: 0;
  width: 800px;
  height: 600px;
  fill: none;
  stroke: #f00;
  stroke-width: 2.5px;
  pointer-events: none;
}
</style>
